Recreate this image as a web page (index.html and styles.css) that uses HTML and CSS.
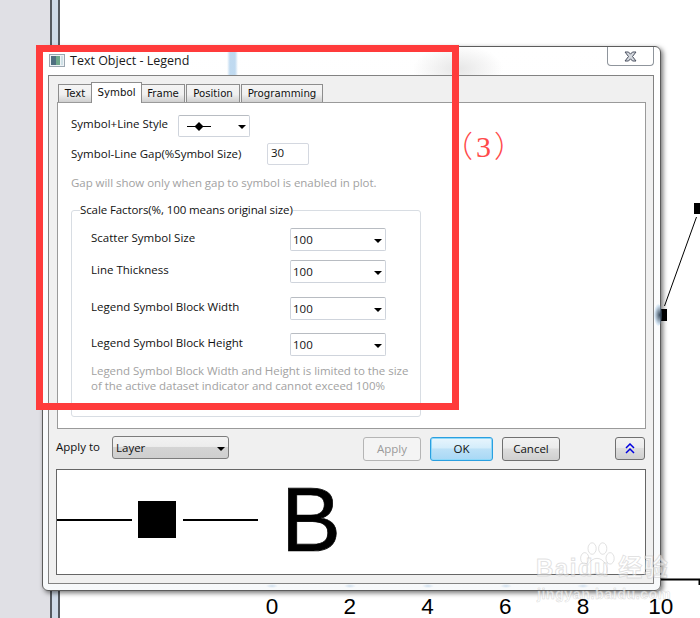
FILE: index.html
```html
<!DOCTYPE html>
<html lang="en">
<head>
<meta charset="utf-8">
<title>Text Object - Legend</title>
<link rel="stylesheet" href="styles.css">
</head>
<body>
<div class="desktop">
  <div class="strip-gray"></div>
  <div class="strip-line"></div>
  <div class="strip-blue"></div>
  <div class="strip-line"></div>
</div>

<svg class="plot" width="700" height="618" viewBox="0 0 700 618">
  <rect x="694" y="203" width="6" height="11" fill="#000"/>
  <rect x="661" y="309" width="6" height="12" fill="#000"/>
  <path d="M696.5 217 L664.5 306" stroke="#000" fill="none"/>
  <path d="M660 579.5 H699.5 V585" stroke="#000" stroke-width="2" fill="none"/>
</svg>

<div class="axis-labels">
  <span>0</span><span>2</span><span>4</span><span>6</span><span>8</span><span>10</span>
</div>

<div class="dialog">
  <div class="titlebar">
    <svg class="win-icon" width="16" height="13" viewBox="0 0 16 13">
      <rect x="0.5" y="0.5" width="15" height="12" fill="#eef2f5" stroke="#9aa6b0"/>
      <rect x="2" y="2" width="5" height="9" fill="#4f6f80"/>
      <rect x="7" y="2" width="4" height="9" fill="#6fa88c"/>
      <rect x="12" y="2" width="2" height="9" fill="#cfe0e6"/>
    </svg>
    <span class="title-text">Text Object - Legend</span>
    <div class="close-btn">
      <svg width="13" height="11" viewBox="0 0 13 11">
        <path d="M1 1 H4.5 L6.5 3.2 L8.5 1 H12 L8.5 5.5 L12 10 H8.5 L6.5 7.8 L4.5 10 H1 L4.5 5.5 Z" fill="#d4d8de" stroke="#4a5060" stroke-width="1"/>
      </svg>
    </div>
  </div>

  <div class="frame">
    <div class="tabs">
      <div class="tab tab-text">Text</div>
      <div class="tab tab-active">Symbol</div>
      <div class="tab tab-frame">Frame</div>
      <div class="tab tab-position">Position</div>
      <div class="tab tab-programming">Programming</div>
    </div>

    <div class="panel">
      <div class="row-style">
        <span class="label">Symbol+Line Style</span>
        <div class="combo combo-style">
          <svg width="24" height="9" viewBox="0 0 24 9">
            <path d="M0 4.5 H24" stroke="#000"/>
            <path d="M12 0 L16.5 4.5 L12 9 L7.5 4.5 Z" fill="#000"/>
          </svg>
          <i class="arrow"></i>
        </div>
      </div>
      <div class="row-gap">
        <span class="label">Symbol-Line Gap(%Symbol Size)</span>
        <div class="input">30</div>
      </div>
      <p class="hint hint-gap">Gap will show only when gap to symbol is enabled in plot.</p>

      <fieldset class="group">
        <legend class="group-title">Scale Factors(%, 100 means original size)</legend>
        <div class="scale-row scale-first">
          <span class="label">Scatter Symbol Size</span>
          <div class="combo combo-scale">100<i class="arrow"></i></div>
        </div>
        <div class="scale-row scale-second">
          <span class="label">Line Thickness</span>
          <div class="combo combo-scale">100<i class="arrow"></i></div>
        </div>
        <div class="scale-row scale-third">
          <span class="label">Legend Symbol Block Width</span>
          <div class="combo combo-scale">100<i class="arrow"></i></div>
        </div>
        <div class="scale-row scale-fourth">
          <span class="label">Legend Symbol Block Height</span>
          <div class="combo combo-scale">100<i class="arrow"></i></div>
        </div>
        <p class="hint hint-note">Legend Symbol Block Width and Height is limited to the size<br>of the active dataset indicator and cannot exceed 100%</p>
      </fieldset>
    </div>

    <div class="actions">
      <span class="label apply-label">Apply to</span>
      <div class="combo combo-layer">Layer<i class="arrow"></i></div>
      <div class="btn btn-apply">Apply</div>
      <div class="btn btn-ok">OK</div>
      <div class="btn btn-cancel">Cancel</div>
      <div class="btn btn-expand">
        <svg width="10" height="11" viewBox="0 0 10 11">
          <path d="M1 5 L5 1 L9 5 M1 10 L5 6 L9 10" stroke="#0000e0" stroke-width="1.5" fill="none"/>
        </svg>
      </div>
    </div>

    <div class="preview">
      <i class="pv-line"></i>
      <i class="pv-square"></i>
      <i class="pv-line pv-line-second"></i>
      <span class="pv-letter">B</span>
    </div>
  </div>
</div>

<div class="edge-glow"></div>
<div class="red-box"></div>
<div class="red-note">（3）</div>

<div class="watermark">
  <svg class="paw" width="40" height="36" viewBox="0 0 48 44">
    <g fill="#ffffff" fill-opacity="0.5" stroke="#bdbdbd" stroke-opacity="0.55">
      <ellipse cx="9" cy="20" rx="5" ry="7"/>
      <ellipse cx="18" cy="8" rx="5" ry="7"/>
      <ellipse cx="31" cy="8" rx="5" ry="7"/>
      <ellipse cx="40" cy="20" rx="5" ry="7"/>
      <path d="M24 20 C32 20 38 30 36 37 C33 42 28 38 24 38 C20 38 15 42 12 37 C10 30 16 20 24 20 Z"/>
    </g>
  </svg>
  <div class="wm-name">Baidu 经验</div>
  <div class="wm-url">jingyan.baidu.com</div>
</div>
</body>
</html>
```
FILE: styles.css
```css
* { box-sizing: border-box; }

html, body {
  margin: 0;
  padding: 0;
  width: 700px;
  height: 618px;
  overflow: hidden;
  background: #fff;
  font-family: "Open Sans", "Noto Sans", sans-serif;
  font-size: 11.5px;
  color: #111;
}

/* ---------- background application ---------- */
.desktop {
  position: absolute;
  left: 0;
  top: 0;
  height: 618px;
  display: flex;
}
.strip-gray { width: 50px; background: #e0e0e5; }
.strip-line { width: 1.5px; background: #555a60; }
.strip-blue { width: 6.5px; background: #cfdbe8; }

.plot { position: absolute; left: 0; top: 0; }

.axis-labels {
  position: absolute;
  left: 233px;
  top: 595px;
  width: 467px;
  display: grid;
  grid-template-columns: repeat(6, 77.8px);
  font: 22.5px/24px "Liberation Sans", Arial, sans-serif;
  color: #000;
  text-align: center;
}

/* ---------- dialog window ---------- */
.dialog {
  position: absolute;
  left: 42px;
  top: 46px;
  width: 619px;
  height: 545px;
  border: 1px solid #5c5c5c;
  border-radius: 6px;
  box-shadow: 2px 2px 5px rgba(0, 0, 0, 0.55);
  padding: 0 6px 0 5px;
  background:
    linear-gradient(90deg, transparent 184px, rgba(170, 205, 235, 0.75) 187px, rgba(170, 205, 235, 0.75) 192px, transparent 195px) 0 0 / 100% 30px no-repeat,
    radial-gradient(ellipse 45px 24px at 415px 22px, #e6e6e6, transparent) 0 0 / 100% 30px no-repeat,
    radial-gradient(ellipse 6px 2px at 229px 539px, #cfdfee, transparent),
    radial-gradient(ellipse 6px 2px at 307px 539px, #cfdfee, transparent),
    radial-gradient(ellipse 6px 2px at 385px 539px, #cfdfee, transparent),
    radial-gradient(ellipse 6px 2px at 463px 539px, #cfdfee, transparent),
    radial-gradient(ellipse 6px 2px at 540px 539px, #cfdfee, transparent),
    linear-gradient(#ffffff, #f7f9fb);
}

.titlebar {
  height: 28px;
  display: flex;
  align-items: center;
  position: relative;
  padding: 0 0 1px 1px;
}
.win-icon { flex: none; }
.title-text {
  margin-left: 5px;
  font-size: 12.5px;
  color: #1a1a1a;
}
.close-btn {
  margin-left: auto;
  align-self: flex-start;
  width: 47px;
  height: 19px;
  border: 1px solid #8f959c;
  border-top: 0;
  border-radius: 0 0 4px 4px;
  background: #fff;
  display: flex;
  align-items: center;
  justify-content: center;
}

.frame {
  width: 606px;
  height: 509px;
  border: 1px solid #828282;
  background: #f0f0f0;
  padding: 6px 7px 0;
}

/* ---------- tabs ---------- */
.tabs {
  display: flex;
  align-items: flex-end;
  height: 20px;
  margin-left: 2px;
}
.tab {
  height: 18px;
  border: 1px solid #8d8d8d;
  border-bottom: 0;
  margin-right: 1px;
  background: linear-gradient(#f4f4f4 0, #f0f0f0 55%, #cfcfcf 100%);
  font-family: "DejaVu Sans", sans-serif;
  font-size: 10.2px;
  line-height: 17px;
  text-align: center;
  color: #111;
}
.tab-text { width: 33px; margin-right: 0; border-right: 0; }
.tab-active {
  width: 51px;
  height: 21px;
  margin: 0 0 -1px;
  background: #fff;
  line-height: 19px;
  position: relative;
  z-index: 1;
}
.tab-frame { width: 43px; border-left: 0; }
.tab-position { width: 54px; }
.tab-programming { width: 82px; }

.panel {
  margin-left: 1px;
  width: 589px;
  height: 327px;
  border: 1px solid #9a9a9a;
  background: #fff;
  padding: 12px 0 0 13px;
}

.label { display: block; color: #111; line-height: 16px; }

.row-style {
  display: grid;
  grid-template-columns: 107px 72px;
  align-items: center;
}
.row-style .label { padding-bottom: 5px; }
.row-gap {
  display: grid;
  grid-template-columns: 196px 42px;
  align-items: center;
  margin-top: 6px;
}
.input {
  height: 22px;
  border: 1px solid #d4d8e0;
  border-radius: 2px;
  padding-left: 3px;
  line-height: 18px;
  background: #fff;
}

.hint { margin: 0; color: #a2a2a2; }
.hint-gap { margin-top: 10px; line-height: 16px; letter-spacing: -0.04px; }

/* ---------- combos ---------- */
.combo {
  position: relative;
  background: #fff;
  border: 1px solid #cfd4dc;
  border-top-color: #b8bcc2;
  border-radius: 2px;
}
.arrow {
  position: absolute;
  right: 3px;
  top: 50%;
  margin-top: -1px;
  width: 0;
  height: 0;
  border-left: 4px solid transparent;
  border-right: 4px solid transparent;
  border-top: 4px solid #000;
}
.combo-style {
  height: 22px;
  display: flex;
  align-items: center;
  padding-left: 8px;
}
.combo-scale {
  height: 23px;
  padding-left: 2px;
  line-height: 21px;
}

/* ---------- scale factors group ---------- */
.group {
  display: block;
  margin: 11px 0 0;
  width: 350px;
  height: 215px;
  min-width: 0;
  padding: 0;
  border: 1px solid #d8dde3;
  border-radius: 3px;
}
.group-title {
  margin-left: 8px;
  padding: 0;
  line-height: 16px;
  color: #111;
  letter-spacing: -0.1px;
}
.scale-row {
  display: grid;
  grid-template-columns: 199px 96px;
  padding-left: 19px;
  align-items: center;
}
.scale-row .label { padding-bottom: 3px; }
.scale-first { margin-top: 10px; }
.scale-second { margin-top: 9px; }
.scale-third { margin-top: 14px; }
.scale-fourth { margin-top: 13px; }
.hint-note {
  margin: 7px 0 0 19px;
  line-height: 15px;
  white-space: nowrap;
  letter-spacing: -0.03px;
}

/* ---------- action row ---------- */
.actions {
  margin-top: 7px;
  height: 25px;
  display: flex;
  align-items: flex-start;
}
.apply-label { width: 56px; line-height: 22px; }
.combo-layer {
  width: 117px;
  height: 23px;
  border: 1px solid #7c7c7c;
  border-radius: 3px;
  background: linear-gradient(#f2f2f2 0, #ededed 45%, #d4d4d4 50%, #cfcfcf 100%);
  padding-left: 3px;
  line-height: 21px;
}
.btn {
  margin-top: 1px;
  height: 24px;
  border: 1px solid #707070;
  border-radius: 3px;
  background: linear-gradient(#f2f2f2 0, #ebebeb 45%, #dddddd 50%, #cfcfcf 100%);
  text-align: center;
  line-height: 21px;
  color: #111;
}
.btn-apply {
  margin-left: 134px;
  width: 58px;
  border-color: #b5b5b5;
  background: #f4f4f4;
  color: #9a9a9a;
}
.btn-ok {
  margin-left: 9px;
  width: 63px;
  border-color: #2a9fe0;
  box-shadow: inset 0 0 0 1px #8ed8f8;
  background: linear-gradient(#e8f5fd 0, #d4edfb 45%, #bce1f7 50%, #a8d8f5 100%);
}
.btn-cancel { margin-left: 9px; width: 58px; }
.btn-expand {
  margin-left: 55px;
  width: 30px;
  height: 23px;
  display: flex;
  align-items: center;
  justify-content: center;
}

/* ---------- preview ---------- */
.preview {
  margin-top: 8px;
  height: 106px;
  border: 1px solid #666;
  background: #fff;
  display: flex;
  align-items: center;
  padding-bottom: 5px;
}
.pv-line { display: block; width: 75px; height: 2px; background: #000; flex: none; }
.pv-square { display: block; width: 38px; height: 37px; margin-left: 6px; background: #000; flex: none; }
.pv-line-second { margin-left: 7px; }
.pv-letter {
  margin-left: 23px;
  font: 90px/1 "Liberation Sans", Arial, sans-serif;
  color: #000;
  -webkit-text-stroke: 0.7px #000;
}

/* ---------- annotation overlays ---------- */
.edge-glow {
  position: absolute;
  left: 654px;
  top: 304px;
  width: 8px;
  height: 22px;
  border-radius: 50%;
  background: radial-gradient(ellipse at 70% 50%, rgba(30, 50, 70, 0.85), rgba(150, 190, 225, 0.4) 60%, transparent 80%);
}
.red-box {
  position: absolute;
  left: 36px;
  top: 45px;
  width: 423px;
  height: 365px;
  border: 7px solid #ff3b3b;
}
.red-note {
  position: absolute;
  left: 443px;
  top: 128px;
  font-family: "Liberation Serif", "Noto Sans CJK SC", serif;
  font-size: 30px;
  line-height: 38px;
  font-weight: 300;
  letter-spacing: 3px;
  color: #ff4a4a;
  white-space: nowrap;
}

/* ---------- watermark ---------- */
.watermark {
  position: absolute;
  left: 530px;
  top: 540px;
  width: 170px;
  height: 78px;
}
.paw { position: absolute; left: 47px; top: 2px; }
.wm-name {
  position: absolute;
  left: 6px;
  top: 12px;
  font: bold 24px/32px "Liberation Sans", "Noto Sans CJK SC", sans-serif;
  letter-spacing: 1.5px;
  white-space: nowrap;
  color: rgba(255, 255, 255, 0.5);
  -webkit-text-stroke: 1px rgba(190, 190, 190, 0.45);
}
.wm-url {
  position: absolute;
  left: 7px;
  top: 45px;
  font: bold 14.5px/18px "Liberation Sans", sans-serif;
  letter-spacing: 0.4px;
  white-space: nowrap;
  color: rgba(255, 255, 255, 0.6);
  -webkit-text-stroke: 0.5px rgba(170, 170, 170, 0.45);
}
```
